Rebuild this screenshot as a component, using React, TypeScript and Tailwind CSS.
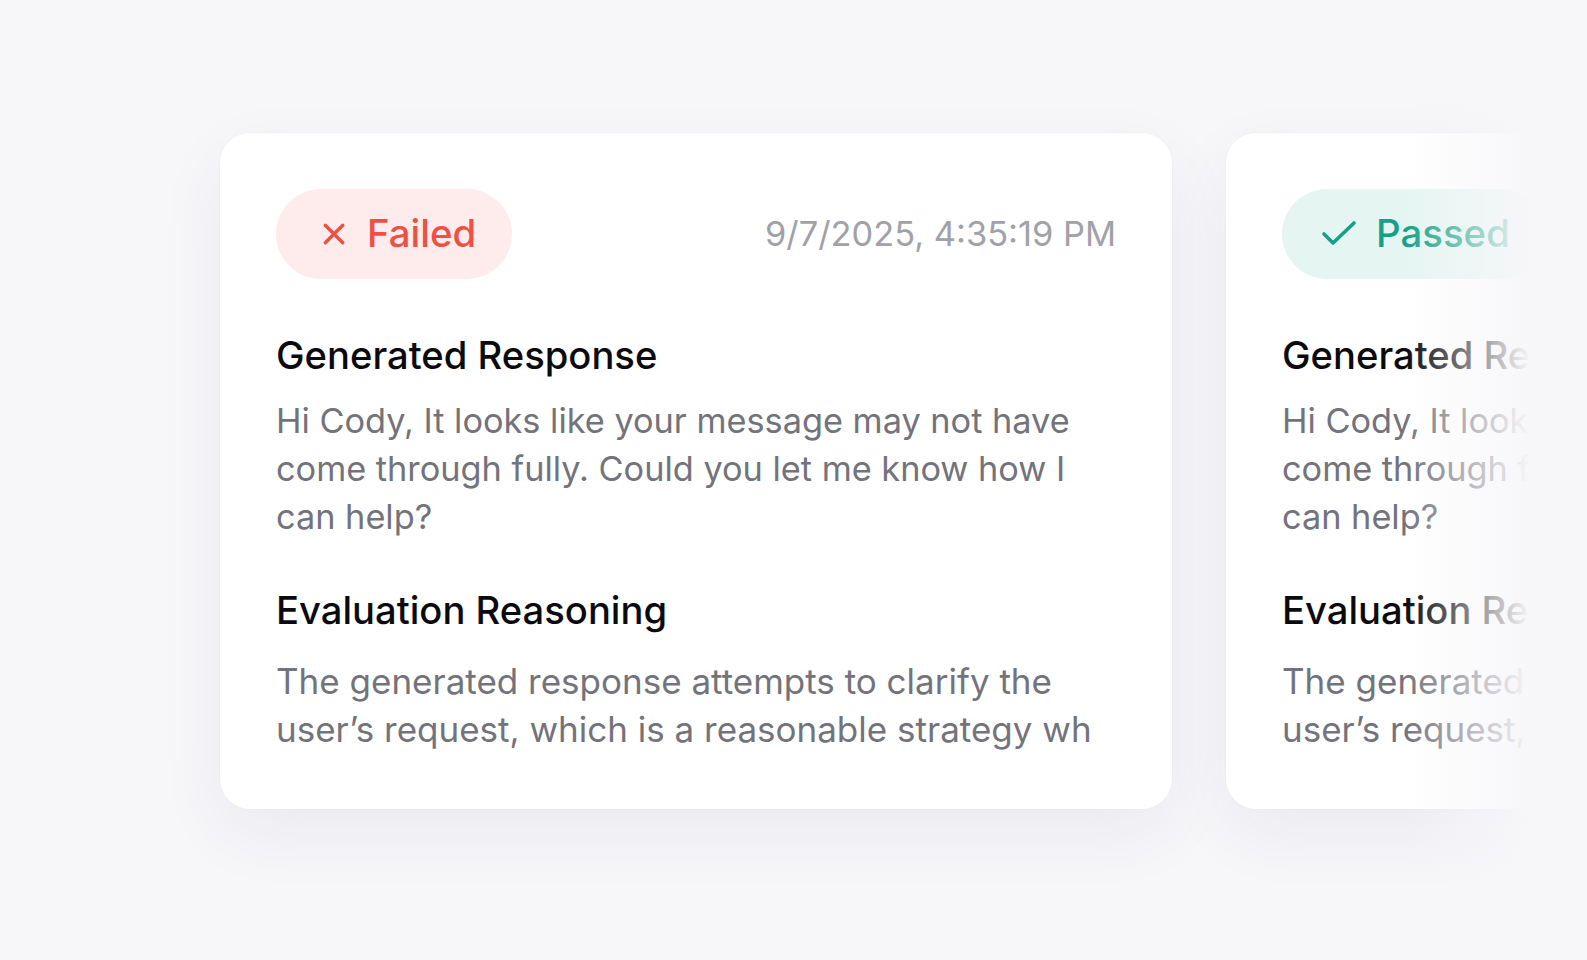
import React from "react";

const FONT = { fontFamily: "Inter, 'Noto Sans', sans-serif" };

function XIcon() {
  return (
    <svg width="28" height="28" viewBox="0 0 24 24" fill="none" stroke="currentColor" strokeWidth="2.9" strokeLinecap="round">
      <path d="M4.5 4.5L19.5 19.5M19.5 4.5L4.5 19.5" />
    </svg>
  );
}

function CheckIcon() {
  return (
    <svg width="36" height="28" viewBox="0 0 36 28" fill="none" stroke="currentColor" strokeWidth="3.6" strokeLinecap="round" strokeLinejoin="round">
      <path d="M3 14L12 23L33 3" />
    </svg>
  );
}

function Card({ passed }: { passed: boolean }) {
  return (
    <div className="w-[952px] shrink-0 rounded-[30px] bg-white px-[56px] pt-[56px] pb-[56px] shadow-[0_24px_70px_rgba(40,30,80,0.06),0_0_0_1px_rgba(40,30,80,0.015)]">
      <div className="flex items-center justify-between">
        {passed ? (
          <div className="flex h-[90px] items-center gap-[19px] rounded-full bg-[#e5f6f2] pl-[39px] pr-[36px] text-[38.4px] font-medium text-[#16a085]">
            <CheckIcon />
            <span>Passed</span>
          </div>
        ) : (
          <div className="flex h-[90px] items-center gap-[19px] rounded-full bg-[#fdeceb] pl-[44px] pr-[36px] text-[38.4px] font-medium text-[#ef5044]">
            <XIcon />
            <span>Failed</span>
          </div>
        )}
        <div className="text-[34.4px] text-[#a1a1a8]">9/7/2025, 4:35:19 PM</div>
      </div>
      <div className="mt-[47px] text-[38.2px] leading-[58px] font-medium text-[#0b0b0f]">Generated Response</div>
      <p className="mt-[13px] text-[34.3px] leading-[48px] text-[#73737c]">
        Hi Cody, It looks like your message may not have come through fully. Could you let me know how I can help?
      </p>
      <div className="mt-[40px] text-[38.2px] leading-[58px] font-medium text-[#0b0b0f]">Evaluation Reasoning</div>
      <p className="mt-[18px] text-[35px] leading-[48px] text-[#73737c]">
        The generated response attempts to clarify the user’s request, which is a reasonable strategy wh
      </p>
    </div>
  );
}

export default function App() {
  return (
    <div className="h-[960px] w-full overflow-hidden bg-[#f7f6f9]" style={FONT}>
      <div className="relative w-[1530px] overflow-hidden pl-[220px] pt-[133px] pb-[150px]">
        <div className="flex w-max gap-[54px]">
          <Card passed={false} />
          <Card passed={true} />
        </div>
        <div className="pointer-events-none absolute top-0 right-0 bottom-0 w-[125px] bg-linear-to-r from-[#f7f6f900] to-[#f7f6f9]" />
      </div>
    </div>
  );
}
